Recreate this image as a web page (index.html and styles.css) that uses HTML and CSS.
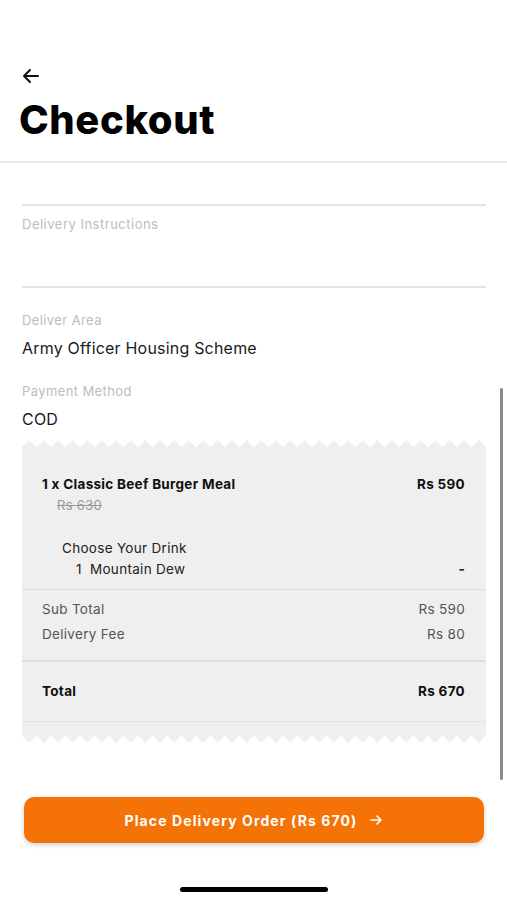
FILE: index.html
```html
<!DOCTYPE html>
<html lang="en">
<head>
    <meta charset="UTF-8">
    <meta name="viewport" content="width=device-width, initial-scale=1.0">
    <title>Checkout</title>
    <link rel="stylesheet" href="styles.css">
</head>
<body>
    <div class="screen">
        <div class="header">
            <button class="back" aria-label="Back">
                <svg width="20" height="20" viewBox="0 0 20 20" fill="none" stroke="#111" stroke-width="2" stroke-linecap="round" stroke-linejoin="round">
                    <path d="M17 10H3M9 4l-6 6 6 6"/>
                </svg>
            </button>
            <h1>Checkout</h1>
        </div>

        <div class="content">
            <div class="scrollbar"></div>

            <div class="field field-top"></div>
            <div class="field textarea">
                <span class="placeholder">Delivery Instructions</span>
            </div>

            <div class="info">
                <div class="label">Deliver Area</div>
                <div class="value">Army Officer Housing Scheme</div>
            </div>
            <div class="info">
                <div class="label">Payment Method</div>
                <div class="value">COD</div>
            </div>

            <div class="receipt">
                <div class="zig top"></div>
                <div class="receipt-body">
                    <div class="item">
                        <div class="row bold">
                            <span>1 x Classic Beef Burger Meal</span>
                            <span>Rs 590</span>
                        </div>
                        <div class="old-price">Rs 630</div>
                        <div class="option-title">Choose Your Drink</div>
                        <div class="row option">
                            <span>1&nbsp; Mountain Dew</span>
                            <span class="dash">-</span>
                        </div>
                    </div>
                    <div class="sums">
                        <div class="row muted"><span>Sub Total</span><span>Rs 590</span></div>
                        <div class="row muted"><span>Delivery Fee</span><span>Rs 80</span></div>
                    </div>
                    <div class="total">
                        <div class="row bold"><span>Total</span><span>Rs 670</span></div>
                    </div>
                    <div class="tail"></div>
                </div>
                <div class="zig bottom"></div>
            </div>
        </div>

        <div class="footer">
            <button class="place">
                Place Delivery Order (Rs 670)
                <svg width="14" height="14" viewBox="0 0 14 14" fill="none" stroke="#fff" stroke-width="1.6" stroke-linecap="round" stroke-linejoin="round">
                    <path d="M2 7h10M8 3l4 4-4 4"/>
                </svg>
            </button>
        </div>
        <div class="home-bar"></div>
    </div>
</body>
</html>
```
FILE: styles.css
```css
* {
    box-sizing: border-box;
}
body {
    margin: 0;
    background: #fff;
    font-family: "Inter", "Open Sans", sans-serif;
    color: #1a1a1a;
}
.screen {
    width: 507px;
    height: 900px;
    display: flex;
    flex-direction: column;
    overflow: hidden;
}
.header {
    padding: 65px 19px 0;
    height: 163px;
    border-bottom: 2px solid #ebebeb;
}
.back {
    background: none;
    border: none;
    padding: 0;
    margin: 0 0 0 2px;
    height: 24px;
    display: block;
    cursor: pointer;
}
.header h1 {
    margin: 8px 0 0;
    font-size: 40px;
    font-weight: 800;
    letter-spacing: 0.6px;
    color: #000;
    line-height: 46px;
}
.content {
    position: relative;
    flex: 1;
    padding: 0 21px 0 22px;
}
.scrollbar {
    position: absolute;
    right: 4px;
    top: 225px;
    width: 3px;
    height: 392px;
    border-radius: 2px;
    background: #8a8a8a;
}
.field {
    border-bottom: 2px solid #e3e3e3;
}
.field-top {
    height: 43px;
}
.textarea {
    height: 82px;
    padding-top: 7px;
}
.placeholder {
    font-size: 13px;
    letter-spacing: 0.5px;
    color: #bdbdbd;
}
.info {
    margin-top: 24px;
}
.info + .info {
    margin-top: 25px;
}
.label {
    font-size: 13px;
    letter-spacing: 0.4px;
    color: #bdbdbd;
    margin-bottom: 10px;
}
.value {
    font-size: 16px;
    letter-spacing: 0.2px;
    color: #1a1a1a;
}
.receipt {
    margin: 11px 0 0 0;
}
.zig {
    height: 7px;
    background-size: 14.5px 7px;
    background-repeat: repeat-x;
}
.zig.top {
    background-image: conic-gradient(from 135deg at 50% 0, #efefef 90deg, transparent 0);
}
.zig.bottom {
    background-image: conic-gradient(from -45deg at 50% 100%, #efefef 90deg, transparent 0);
}
.receipt-body {
    background: #efefef;
    font-size: 13.5px;
    letter-spacing: 0.3px;
}
.row {
    display: flex;
    justify-content: space-between;
    align-items: center;
}
.bold {
    font-weight: 700;
    color: #111;
}
.item {
    padding: 29px 21px 12px 20px;
    border-bottom: 1px solid #dcdcdc;
}
.old-price {
    font-size: 13px;
    color: #9a9a9a;
    text-decoration: line-through;
    margin: 5px 0 0 15px;
}
.option-title {
    margin: 27px 0 0 20px;
    color: #222;
}
.option {
    margin: 5px 0 0 34px;
    color: #222;
}
.dash {
    font-weight: 700;
}
.sums {
    padding: 11px 21px 18px 20px;
    border-bottom: 2px solid #dedede;
    color: #555;
}
.sums .row + .row {
    margin-top: 9px;
}
.total {
    padding: 21px 21px 22px 20px;
    border-bottom: 1px solid #e2e2e2;
}
.tail {
    height: 14px;
}
.footer {
    padding: 0 23px 0 24px;
    margin-bottom: 44px;
}
.place {
    width: 100%;
    height: 46px;
    border: none;
    border-radius: 10px;
    background: #f57206;
    color: #fff;
    font-family: inherit;
    font-size: 14px;
    font-weight: 700;
    letter-spacing: 1.1px;
    display: flex;
    align-items: center;
    justify-content: center;
    gap: 12px;
    box-shadow: 0 2px 5px rgba(0, 0, 0, 0.18);
    cursor: pointer;
}
.home-bar {
    width: 148px;
    height: 5px;
    border-radius: 3px;
    background: #000;
    margin: 0 auto 8px;
}
```
